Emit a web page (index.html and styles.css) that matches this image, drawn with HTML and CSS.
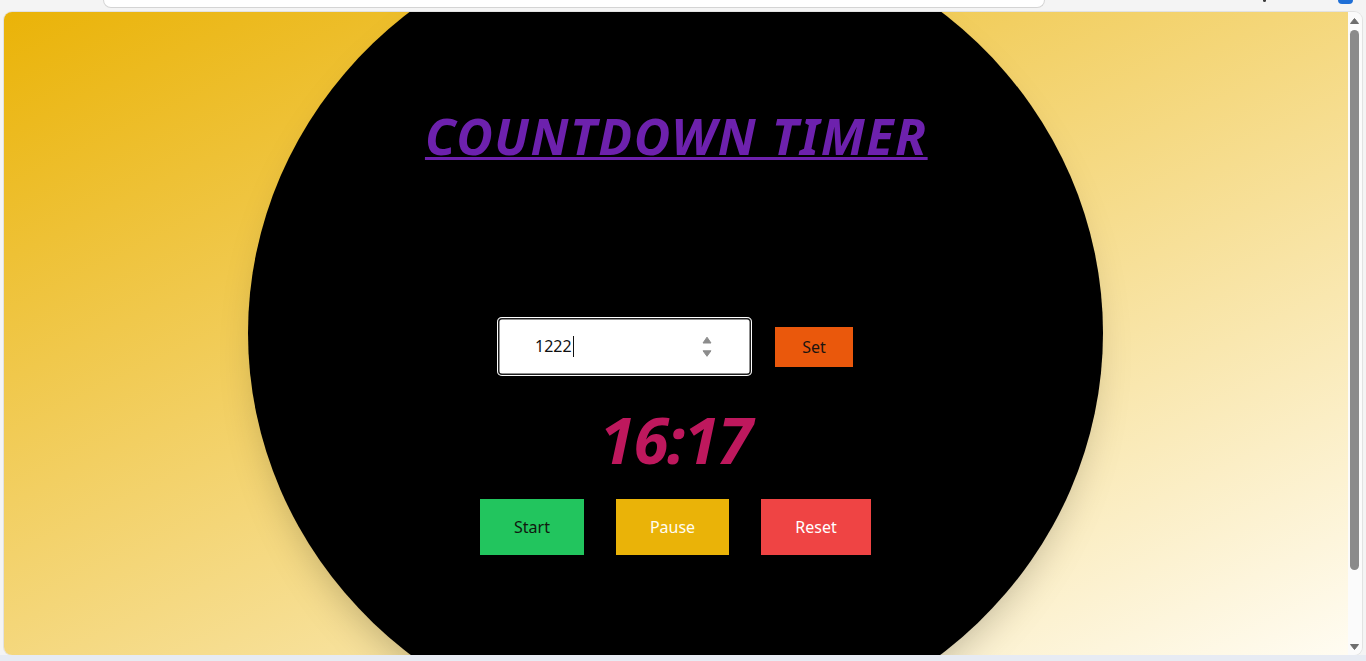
FILE: index.html
```html
<!DOCTYPE html>
<html lang="en">
<head>
<meta charset="utf-8">
<title>Countdown Timer</title>
<link rel="stylesheet" href="styles.css">
</head>
<body>
<div class="browser">
  <div class="topbar">
    <div class="omnibox"></div>
    <div class="tb-icon tb-dark"></div>
    <div class="tb-icon tb-blue"></div>
  </div>
  <div class="window">
    <main class="page">
      <div class="circle">
        <h1 class="title">COUNTDOWN TIMER</h1>
        <div class="set-row">
          <div class="field">
            <span class="field-value">1222</span><span class="caret"></span>
            <svg class="spinner" width="10" height="21" viewBox="0 0 10 21">
              <polygon points="1,7 5,1.2 9,7" fill="#8c8c8c" stroke="#8c8c8c" stroke-width="1" stroke-linejoin="round"/>
              <polygon points="1,14.8 5,20.3 9,14.8" fill="#8c8c8c" stroke="#8c8c8c" stroke-width="1" stroke-linejoin="round"/>
            </svg>
          </div>
          <button class="btn btn-set">Set</button>
        </div>
        <div class="time">16:17</div>
        <div class="controls">
          <button class="btn btn-start">Start</button>
          <button class="btn btn-pause">Pause</button>
          <button class="btn btn-reset">Reset</button>
        </div>
      </div>
    </main>
    <div class="scrollbar">
      <svg class="sb-arrow" width="9" height="6" viewBox="0 0 9 6"><polygon points="0.5,5.5 4.5,0.5 8.5,5.5" fill="#6e6e6e" stroke="#6e6e6e" stroke-linejoin="round"/></svg>
      <div class="sb-thumb"></div>
      <div class="sb-space"></div>
      <svg class="sb-arrow" width="9" height="6" viewBox="0 0 9 6"><polygon points="0.5,0.5 4.5,5.5 8.5,0.5" fill="#6e6e6e" stroke="#6e6e6e" stroke-linejoin="round"/></svg>
    </div>
  </div>
  <div class="bottombar"></div>
</div>
</body>
</html>
```
FILE: styles.css
```css
* { box-sizing: border-box; }

html, body {
  margin: 0;
  padding: 0;
  width: 1366px;
  height: 661px;
  overflow: hidden;
  background: #f4f4f4;
  font-family: "Segoe UI", "Noto Sans", "Open Sans", sans-serif;
}

.browser {
  display: flex;
  flex-direction: column;
  height: 661px;
}

.topbar {
  height: 12px;
  display: flex;
  align-items: flex-start;
  flex-shrink: 0;
}

.omnibox {
  margin-left: 103px;
  width: 942px;
  height: 8px;
  background: #ffffff;
  border: 1px solid #d4d4d4;
  border-top: none;
  border-radius: 0 0 14px 14px;
}

.tb-icon { flex-shrink: 0; }

.tb-dark {
  margin-left: 218px;
  width: 3px;
  height: 2px;
  background: #3a3a3a;
  border-radius: 0 0 2px 2px;
}

.tb-blue {
  margin-left: 72px;
  width: 15px;
  height: 4px;
  background: #1f6fd6;
  border-radius: 0 0 7px 7px;
}

.window {
  height: 643px;
  margin: 0 4px;
  display: flex;
  border-radius: 8px;
  overflow: hidden;
  box-shadow: 0 0 0 1px #e2e2e2;
  flex-shrink: 0;
}

.page {
  flex: 1;
  display: flex;
  flex-direction: column;
  align-items: center;
  overflow: hidden;
  background: linear-gradient(to bottom right, #eab308 0%, #fffcf2 100%);
}

.circle {
  flex-shrink: 0;
  width: 855px;
  height: 820px;
  margin-top: -89px;
  margin-right: 1px;
  border-radius: 50%;
  background: #000000;
  box-shadow: 0 22px 40px -14px rgba(0, 0, 0, 0.25);
  display: flex;
  flex-direction: column;
  align-items: center;
  padding-top: 188px;
}

.title {
  margin: 0;
  font-size: 50px;
  line-height: 50px;
  font-weight: 700;
  font-style: italic;
  color: #6d21ad;
  text-decoration: underline;
  text-decoration-thickness: 3px;
  text-underline-offset: 2px;
  letter-spacing: 1.6px;
  margin-right: -1.6px;
}

.set-row {
  margin-top: 156px;
  display: flex;
  align-items: center;
  gap: 23px;
  margin-right: 1px;
}

.field {
  width: 255px;
  height: 59px;
  background: #ffffff;
  border-radius: 5px;
  box-shadow: inset 0 0 0 1px #ffffff, inset 0 0 0 2.5px #1e1e1e;
  display: flex;
  align-items: center;
  padding: 0 40px 0 38px;
  font-size: 16px;
  color: #111111;
}

.field-value {
  line-height: 21px;
}

.caret {
  width: 1px;
  height: 21px;
  background: #111111;
  margin-left: 1px;
}

.spinner {
  margin-left: auto;
  display: block;
}

.btn {
  border: none;
  border-radius: 0;
  margin: 0;
  padding: 0;
  font-family: inherit;
  font-size: 16px;
  cursor: pointer;
}

.btn-set {
  width: 78px;
  height: 40px;
  background: #ea580c;
  color: #1c1410;
}

.time {
  margin-top: 32px;
  font-size: 64px;
  line-height: 64px;
  font-weight: 700;
  font-style: italic;
  color: #be185d;
  letter-spacing: -1.6px;
}

.controls {
  margin-top: 27px;
  display: flex;
  gap: 32px;
}

.controls .btn {
  height: 56px;
}

.btn-start {
  width: 104px;
  background: #22c55e;
  color: #10180f;
}

.btn-pause {
  width: 113px;
  background: #eab308;
  color: #fffdf2;
}

.btn-reset {
  width: 110px;
  background: #ef4444;
  color: #ffffff;
}

.scrollbar {
  width: 14px;
  flex-shrink: 0;
  background: #fbfbfb;
  display: flex;
  flex-direction: column;
  align-items: flex-start;
  padding: 6px 0 5px 2px;
}

.sb-arrow {
  display: block;
  flex-shrink: 0;
}

.sb-thumb {
  margin-top: 6px;
  width: 9px;
  height: 540px;
  background: #8b8b8b;
  border-radius: 5px;
  flex-shrink: 0;
}

.sb-space { flex: 1; }

.bottombar {
  flex: 1;
  background: #e7ebf3;
}
```
